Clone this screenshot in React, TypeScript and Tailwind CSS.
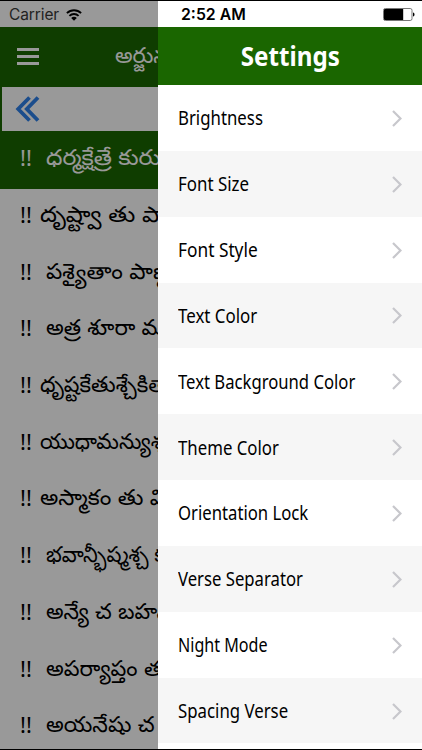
import React from 'react';

const verses = [
  { text: 'ధర్మక్షేత్రే కురుక్షే', gap: 'ml-[14px]', scale: 'scale-x-[1.06]' },
  { text: 'దృష్ట్వా తు పాణ్డ', gap: 'ml-[8px]', scale: 'scale-x-[1.09]' },
  { text: 'పశ్యైతాం పాణ్డు', gap: 'ml-[14px]', scale: 'scale-x-[1.04]' },
  { text: 'అత్ర శూరా మహే', gap: 'ml-[14px]', scale: 'scale-x-[1.01]' },
  { text: 'ధృష్టకేతుశ్చేకితా', gap: 'ml-[8px]', scale: 'scale-x-100' },
  { text: 'యుధామన్యుశ్చ', gap: 'ml-[8px]', scale: 'scale-x-[0.97]' },
  { text: 'అస్మాకం తు విశి', gap: 'ml-[8px]', scale: 'scale-x-[1.04]' },
  { text: 'భవాన్భీష్మశ్చ క', gap: 'ml-[14px]', scale: 'scale-x-[0.955]' },
  { text: 'అన్యే చ బహవః', gap: 'ml-[14px]', scale: 'scale-x-100' },
  { text: 'అపర్యాప్తం తద', gap: 'ml-[14px]', scale: 'scale-x-[1.01]' },
  { text: 'అయనేషు చ', gap: 'ml-[14px]', scale: 'scale-x-[1.01]' },
];

const settings = [
  { label: 'Brightness', scale: 'scale-x-[0.84]' },
  { label: 'Font Size', scale: 'scale-x-[0.845]' },
  { label: 'Font Style', scale: 'scale-x-[0.865]' },
  { label: 'Text Color', scale: 'scale-x-[0.845]' },
  { label: 'Text Background Color', scale: 'scale-x-[0.833]' },
  { label: 'Theme Color', scale: 'scale-x-[0.84]' },
  { label: 'Orientation Lock', scale: 'scale-x-[0.835]' },
  { label: 'Verse Separator', scale: 'scale-x-[0.835]' },
  { label: 'Night Mode', scale: 'scale-x-[0.805]' },
  { label: 'Spacing Verse', scale: 'scale-x-[0.84]' },
];

function WifiIcon() {
  return (
    <svg className="w-4 h-3" viewBox="0 0 16 12" fill="none" stroke="#000" strokeWidth="1.9">
      <path d="M0.9 4.1a10.2 10.2 0 0 1 14.2 0" />
      <path d="M3.4 6.9a6.7 6.7 0 0 1 9.2 0" />
      <path d="M8 11.8 5.2 9a3.9 3.9 0 0 1 5.6 0z" fill="#000" stroke="none" />
    </svg>
  );
}

function BatteryIcon() {
  return (
    <svg className="w-8 h-[13px]" viewBox="0 0 32 13">
      <rect x="0.5" y="0.5" width="28.5" height="12" rx="1.8" fill="#fff" stroke="#777" />
      <path d="M2 1h18.2v11H2a1 1 0 0 1-1-1V2a1 1 0 0 1 1-1z" fill="#000" />
      <path d="M30 4.5c2 .4 2 3.6 0 4z" fill="#000" />
    </svg>
  );
}

function Reader() {
  return (
    <main className="relative w-[158px] h-full shrink-0 overflow-hidden flex flex-col bg-white">
      <div className="h-[26px] shrink-0 flex items-center pt-px pl-[9px] gap-[7px] bg-[#999]">
        <span className="w-[50px] text-[15.5px] leading-none tracking-[-0.1px] text-[#222]">Carrier</span>
        <WifiIcon />
      </div>
      <header className="h-[59px] shrink-0 flex items-center bg-[#1a6600] pl-[17px]">
        <div className="w-[22px] shrink-0 flex flex-col gap-[4px]">
          <span className="h-[3px] bg-white" />
          <span className="h-[3px] bg-white" />
          <span className="h-[3px] bg-white" />
        </div>
        <h1 className="ml-[76px] pb-[3px] whitespace-nowrap text-[22px] leading-none text-white">అర్జున</h1>
      </header>
      <div className="h-[46px] shrink-0 bg-[#1a6600] pl-[2px] pt-px pb-px">
        <div className="h-full bg-white flex items-center pl-[13px]">
          <svg className="w-[25px] h-[26px]" viewBox="0 0 25 26" fill="none" stroke="#2e80ea" strokeWidth="3.8">
            <path d="M14.5 1.5 3.2 13 14.5 24.5" />
            <path d="M23 1.5 11.8 13 23 24.5" />
          </svg>
        </div>
      </div>
      <ul>
        {verses.map((verse, i) => (
          <li
            key={verse.text}
            className={`h-[56.7px] flex items-center pl-[20px] pb-[6px] whitespace-nowrap text-[22px] leading-none ${i === 0 ? 'bg-[#1a6600] text-white' : 'text-black'}`}
          >
            <span className="w-[12px] shrink-0 font-['Noto_Sans',sans-serif]">!!</span>
            <span className={`${verse.gap} ${verse.scale} origin-left`}>{verse.text}</span>
          </li>
        ))}
      </ul>
      {/* dims everything below the status bar while the drawer is open */}
      <div className="absolute inset-x-0 top-[26px] bottom-0 bg-black/40" />
    </main>
  );
}

function SettingsDrawer() {
  return (
    <aside className="flex-1 h-full flex flex-col bg-white font-['Noto_Sans',sans-serif]">
      <div className="h-[26px] shrink-0 flex items-center justify-between pt-px pl-[23px] pr-[7px] font-['Inter',sans-serif]">
        <span className="text-[15.8px] leading-none font-semibold text-black">2:52 AM</span>
        <BatteryIcon />
      </div>
      <header className="h-[58px] shrink-0 flex items-center justify-center bg-[#1a6600]">
        <h2 className="text-[26px] leading-none font-bold text-white scale-x-[0.93]">Settings</h2>
      </header>
      <ul>
        {settings.map((item) => (
          <li key={item.label} className="h-[65.85px] flex items-center justify-between pt-px pl-[20px] pr-[20px] even:bg-[#f6f6f6]">
            <span className={`${item.scale} origin-left whitespace-nowrap text-[20px] leading-none text-black`}>{item.label}</span>
            <svg className="w-[10px] h-[17px] shrink-0" viewBox="0 0 10 17" fill="none" stroke="#c7c7cc" strokeWidth="2.2">
              <path d="M1 1 8.5 8.5 1 16" />
            </svg>
          </li>
        ))}
      </ul>
    </aside>
  );
}

export default function App() {
  return (
    <div className="w-[422px] h-[750px] flex overflow-hidden border-y border-black bg-white font-['Inter','Noto_Sans_Telugu',sans-serif]">
      <Reader />
      <SettingsDrawer />
    </div>
  );
}
